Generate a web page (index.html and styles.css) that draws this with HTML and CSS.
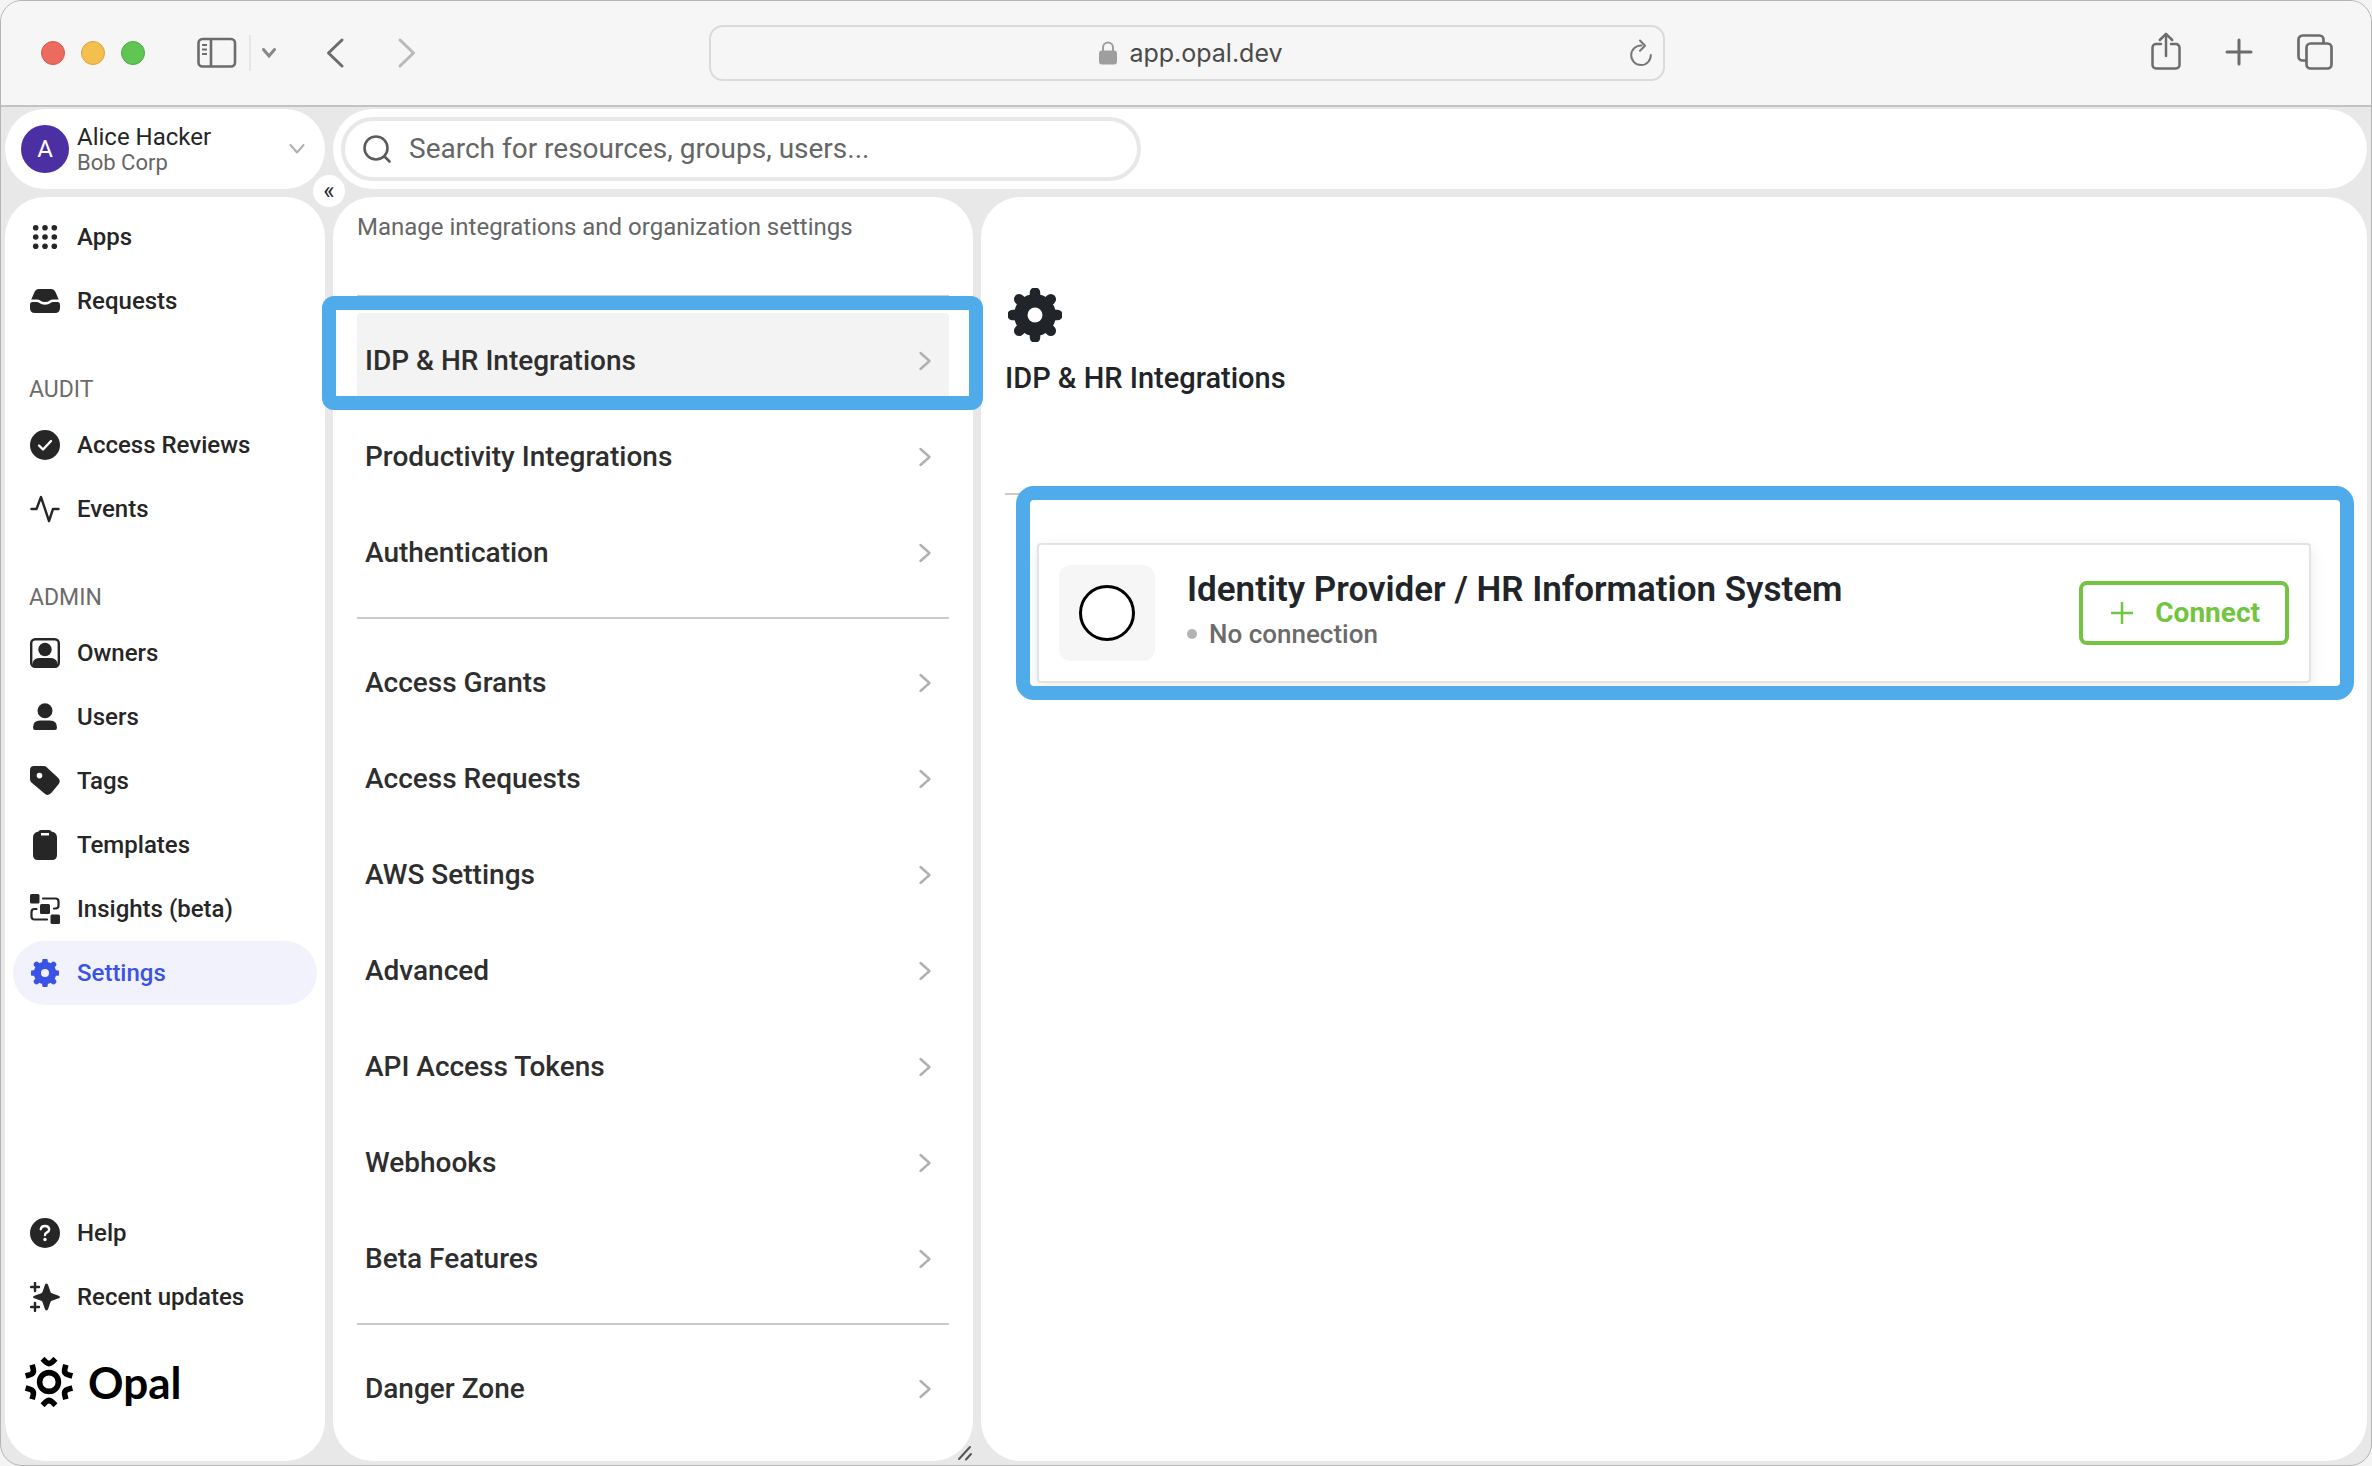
FILE: index.html
```html
<!DOCTYPE html>
<html lang="en">
<head>
<meta charset="utf-8">
<title>Opal – Settings</title>
<link rel="stylesheet" href="styles.css">
</head>
<body>
<svg class="sprite" aria-hidden="true">
  <defs>
    <mask id="gear-hole"><rect width="56" height="56" fill="#fff"/><circle cx="28" cy="28" r="7.5" fill="#000"/></mask>
    <symbol id="gear" viewBox="0 0 56 56">
      <g mask="url(#gear-hole)">
        <circle cx="28" cy="28" r="21" fill="currentColor"/>
        <path d="M28 5.500v45M5.500 28h45M12.200 12.200l31.600 31.600M43.800 12.200L12.200 43.800" stroke="currentColor" stroke-width="10.500" stroke-linecap="round"/>
      </g>
    </symbol>
    <symbol id="chevron" viewBox="0 0 14 20"><path d="M2.500 2l9 8-9 8" fill="none" stroke="currentColor" stroke-width="2.400" stroke-linecap="round" stroke-linejoin="round"/></symbol>
  </defs>
</svg>

<div class="window">
  <header class="titlebar">
    <div class="titlebar-left">
      <div class="lights"><i class="light red"></i><i class="light yellow"></i><i class="light green"></i></div>
      <button class="tool" aria-label="Toggle sidebar"><svg width="40" height="32" viewBox="0 0 40 32" fill="none" stroke="currentColor" stroke-width="2.6"><rect x="1.5" y="2" width="36.500" height="27.500" rx="4"/><path d="M14 2v27.500"/><path d="M5 8h5M5 12.500h5M5 17h5" stroke-width="2"/></svg></button>
      <span class="tool-rule"></span>
      <button class="tool tool-menu" aria-label="Sidebar menu"><svg width="16" height="12" viewBox="0 0 16 12" fill="none" stroke="currentColor" stroke-width="3" stroke-linecap="round"><path d="M2.500 2.500L8 9l5.500-6.500"/></svg></button>
      <button class="tool tool-back" aria-label="Back"><svg width="20" height="32" viewBox="0 0 20 32" fill="none" stroke="currentColor" stroke-width="3" stroke-linecap="round" stroke-linejoin="round"><path d="M17 3L3.500 16 17 29"/></svg></button>
      <button class="tool tool-forward" aria-label="Forward"><svg width="20" height="32" viewBox="0 0 20 32" fill="none" stroke="currentColor" stroke-width="3" stroke-linecap="round" stroke-linejoin="round"><path d="M3 3l13.500 13L3 29"/></svg></button>
    </div>
    <div class="address">
      <div class="address-text">
        <svg width="18" height="24" viewBox="0 0 18 24"><rect x="0" y="9.500" width="18" height="14" rx="3" fill="#9e9e9e"/><path d="M4 11V6.500a5 5 0 0 1 10 0V11" fill="none" stroke="#9e9e9e" stroke-width="2"/></svg>
        <span>app.opal.dev</span>
      </div>
      <button class="reload" aria-label="Reload"><svg width="24" height="28" viewBox="0 0 24 28" fill="none" stroke="currentColor" stroke-width="2" stroke-linecap="round" stroke-linejoin="round"><path d="M12.500 6.500A9.800 9.800 0 1 0 21.800 16M11 1.500l5 5.200-5 5"/></svg></button>
    </div>
    <div class="titlebar-right">
      <button class="tool" aria-label="Share"><svg width="30" height="42" viewBox="0 0 30 42" fill="none" stroke="currentColor" stroke-width="2.500" stroke-linecap="round" stroke-linejoin="round"><path d="M10 12H5a3.500 3.500 0 0 0-3.500 3.500V33A3.500 3.500 0 0 0 5 36.500h20a3.500 3.500 0 0 0 3.500-3.500V15.500A3.500 3.500 0 0 0 25 12h-5M15 24V2.500M8.800 8L15 1.800 21.200 8"/></svg></button>
      <button class="tool" aria-label="New tab"><svg width="28" height="30" viewBox="0 0 28 30" fill="none" stroke="currentColor" stroke-width="3" stroke-linecap="round"><path d="M14 2v24M2 14h24"/></svg></button>
      <button class="tool" aria-label="Tab overview"><svg width="36" height="38" viewBox="0 0 36 38" fill="none" stroke="currentColor" stroke-width="2.700"><rect x="9.500" y="9.500" width="25" height="25" rx="4"/><path d="M9.500 26.500H5.500a4 4 0 0 1-4-4v-17a4 4 0 0 1 4-4h17a4 4 0 0 1 4 4v4"/></svg></button>
    </div>
  </header>

  <div class="app">
    <button class="profile">
      <span class="avatar">A</span>
      <span class="profile-text"><span class="profile-name">Alice Hacker</span><span class="profile-org">Bob Corp</span></span>
      <svg width="16" height="12" viewBox="0 0 16 12" fill="none" stroke="#b0b0b0" stroke-width="2" stroke-linecap="round" stroke-linejoin="round"><path d="M1.500 2L8 9.500 14.500 2"/></svg>
    </button>
    <div class="topbar">
      <label class="search">
        <svg width="28" height="28" viewBox="0 0 28 28" fill="none" stroke="#5c5c5c" stroke-width="2.600" stroke-linecap="round"><circle cx="13" cy="13" r="11.500"/><path d="M21.500 21.500l5 5"/></svg>
        <input type="search" placeholder="Search for resources, groups, users..." aria-label="Search">
      </label>
    </div>

    <nav class="sidebar">
      <button class="collapse" aria-label="Collapse sidebar">«</button>
      <a class="nav-item" href="#"><svg viewBox="0 0 30 30" fill="currentColor"><circle cx="5.700" cy="5.700" r="2.800"/><circle cx="15" cy="5.700" r="2.800"/><circle cx="24.300" cy="5.700" r="2.800"/><circle cx="5.700" cy="15" r="2.800"/><circle cx="15" cy="15" r="2.800"/><circle cx="24.300" cy="15" r="2.800"/><circle cx="5.700" cy="24.300" r="2.800"/><circle cx="15" cy="24.300" r="2.800"/><circle cx="24.300" cy="24.300" r="2.800"/></svg>Apps</a>
      <a class="nav-item" href="#"><svg viewBox="0 0 30 30" fill="currentColor"><path d="M1.300 13.500L4.500 6Q6 3 9 3h12q3 0 4.500 3l3.200 7.500H23q-2 0-3.200 1Q18 16 15 16t-4.800-1.500q-1.200-1-3.200-1z"/><path d="M0 19q0-3 2.500-3H7q1.200 0 2.500 1 2 1.800 5.500 1.800t5.500-1.800q1.300-1 2.500-1h4.500Q30 16 30 19v3q0 5-5 5H5q-5 0-5-5z"/></svg>Requests</a>
      <h2 class="nav-label">AUDIT</h2>
      <a class="nav-item" href="#"><svg viewBox="0 0 30 30"><circle cx="15" cy="15" r="15" fill="currentColor"/><path d="M9 15.500l4 4 8-8.500" fill="none" stroke="#fff" stroke-width="2.400" stroke-linecap="round" stroke-linejoin="round"/></svg>Access Reviews</a>
      <a class="nav-item" href="#"><svg viewBox="0 0 30 30" fill="none" stroke="currentColor" stroke-width="2.400" stroke-linecap="round" stroke-linejoin="round"><path d="M1.500 15H6.500L11 3l8 24 4-12h5.500"/></svg>Events</a>
      <h2 class="nav-label">ADMIN</h2>
      <a class="nav-item" href="#"><svg viewBox="0 0 30 30" fill="currentColor"><rect x="1.200" y="1.200" width="27.600" height="27.600" rx="4" fill="none" stroke="currentColor" stroke-width="2.400"/><circle cx="15" cy="11.500" r="6.700"/><path d="M2.500 25q1.500-5 7-5h11q5.500 0 7 5v3H2.500z"/></svg>Owners</a>
      <a class="nav-item" href="#"><svg viewBox="0 0 30 30" fill="currentColor"><circle cx="15" cy="8.800" r="7.500"/><path d="M3 25.500Q3 18.500 10 18.500h10q7 0 7 7 0 2.500-2 2.500H5q-2 0-2-2.500z"/></svg>Users</a>
      <a class="nav-item" href="#"><svg viewBox="0 0 30 30" fill="currentColor" fill-rule="evenodd"><path d="M4 0H13.500q2 0 3.500 1.400L28 11.800q3.400 3.200 0.300 6.600L21.500 26.800q-3.600 4-7.300 0.500L1.400 16.500Q0 15.200 0 13V4q0-4 4-4zM9.500 6.800a2.800 2.800 0 1 0 0 5.600 2.800 2.800 0 0 0 0-5.600z"/></svg>Tags</a>
      <a class="nav-item" href="#"><svg viewBox="0 0 30 30" fill="currentColor" fill-rule="evenodd"><path d="M8.500 1.500Q9 0 11 0h8q2 0 2.500 1.500Q27 2.500 27 7.500V25q0 5-5 5H8q-5 0-5-5V7.500q0-5 5.500-6zM11 3v2.500h8V3z"/></svg>Templates</a>
      <a class="nav-item" href="#"><svg viewBox="0 0 30 30" fill="currentColor"><rect width="9.500" height="9.500" rx="1.500"/><rect x="10" y="10" width="10" height="10" rx="1.500"/><rect x="20.500" y="20.500" width="9.500" height="9.500" rx="1.500"/><path d="M13 4.500h12.500q3 0 3 3v4q0 3-3 3H24M6.500 15H4.500q-3 0-3 3v4.500q0 3 3 3H17" fill="none" stroke="currentColor" stroke-width="2.200" stroke-linecap="round"/></svg>Insights (beta)</a>
      <a class="nav-item active" href="#" aria-current="page"><svg><use href="#gear"/></svg>Settings</a>
      <div class="nav-bottom">
        <a class="nav-item" href="#"><svg viewBox="0 0 30 30"><circle cx="15" cy="15" r="15" fill="currentColor"/><path d="M10.800 11.200q.4-3.200 4.200-3.200t4.200 3.200q0 2-2.200 3.200t-2 2.600" fill="none" stroke="#fff" stroke-width="2.400" stroke-linecap="round"/><circle cx="15" cy="21.500" r="1.700" fill="#fff"/></svg>Help</a>
        <a class="nav-item" href="#"><svg viewBox="0 0 30 30" fill="currentColor"><path d="M16.500 1.500q1.300 0 1.800 2l2.200 6.500q.3 1 1.300 1.300L28 13.500q2 .5 2 1.500t-2 1.500l-6.200 2.200q-1 .3-1.300 1.300l-2.200 6.500q-.5 2-1.800 2t-1.800-2L12.500 20q-.3-1-1.300-1.300L5 16.500Q3 16 3 15t2-1.500l6.200-2.200q1-.3 1.300-1.300l2.200-6.500q.5-2 1.800-2z"/><path d="M5 1v8M1 5h8M5 21v8M1 25h8" stroke="currentColor" stroke-width="2.400" stroke-linecap="round"/></svg>Recent updates</a>
        <a class="logo" href="#">
          <svg width="50" height="50" viewBox="-25 -25 50 50" fill="none" stroke="#000" stroke-width="5.600">
            <defs><path id="claw" d="M-6.500-23.200L-3-19.800q3 2.600 6 0l3.500-3.400"/></defs>
            <circle r="9.400"/>
            <use href="#claw"/><use href="#claw" transform="rotate(60)"/><use href="#claw" transform="rotate(120)"/><use href="#claw" transform="rotate(180)"/><use href="#claw" transform="rotate(240)"/><use href="#claw" transform="rotate(300)"/>
          </svg>
          <span>Opal</span>
        </a>
      </div>
    </nav>

    <section class="list-panel">
      <p class="list-intro">Manage integrations and organization settings</p>
      <ul class="setting-group">
        <li class="setting-cell"><a class="setting selected" href="#">IDP &amp; HR Integrations<svg><use href="#chevron"/></svg></a><span class="callout callout-row"></span></li>
        <li><a class="setting" href="#">Productivity Integrations<svg><use href="#chevron"/></svg></a></li>
        <li><a class="setting" href="#">Authentication<svg><use href="#chevron"/></svg></a></li>
      </ul>
      <ul class="setting-group">
        <li><a class="setting" href="#">Access Grants<svg><use href="#chevron"/></svg></a></li>
        <li><a class="setting" href="#">Access Requests<svg><use href="#chevron"/></svg></a></li>
        <li><a class="setting" href="#">AWS Settings<svg><use href="#chevron"/></svg></a></li>
        <li><a class="setting" href="#">Advanced<svg><use href="#chevron"/></svg></a></li>
        <li><a class="setting" href="#">API Access Tokens<svg><use href="#chevron"/></svg></a></li>
        <li><a class="setting" href="#">Webhooks<svg><use href="#chevron"/></svg></a></li>
        <li><a class="setting" href="#">Beta Features<svg><use href="#chevron"/></svg></a></li>
      </ul>
      <ul class="setting-group">
        <li><a class="setting" href="#">Danger Zone<svg><use href="#chevron"/></svg></a></li>
      </ul>
      <svg class="resize" width="16" height="16" viewBox="0 0 16 16" stroke="#555" stroke-width="2" stroke-linecap="round"><path d="M2 14L13 2M9 14.500l5-5.500"/></svg>
    </section>

    <main class="detail">
      <svg class="detail-icon"><use href="#gear"/></svg>
      <h1 class="detail-title">IDP &amp; HR Integrations</h1>
      <div class="detail-body">
        <article class="card">
          <div class="card-tile"><span class="card-ring"></span></div>
          <div class="card-text">
            <h2 class="card-title">Identity Provider / HR Information System</h2>
            <p class="card-status">No connection</p>
          </div>
          <button class="connect"><svg width="22" height="22" viewBox="0 0 22 22" stroke="currentColor" stroke-width="2.500"><path d="M11 0v22M0 11h22"/></svg>Connect</button>
          <span class="callout callout-card"></span>
        </article>
      </div>
    </main>
  </div>
</div>
</body>
</html>
```
FILE: styles.css
```css
* { box-sizing: border-box; }

body {
  margin: 0;
  background: #f4f4f4;
  color: #262626;
  font-family: Roboto, "Liberation Sans", sans-serif;
  font-size: 24px;
  line-height: 32px;
}

button {
  border: 0;
  padding: 0;
  background: none;
  color: inherit;
  font: inherit;
}

a { color: inherit; text-decoration: none; }
h1, h2, p, ul { margin: 0; padding: 0; font-size: inherit; }
ul { list-style: none; }
svg { display: block; flex: none; }

.sprite { position: absolute; width: 0; height: 0; }

.window {
  display: flex;
  flex-direction: column;
  min-height: 100vh;
  border: 1px solid #b4b4b4;
  border-radius: 22px;
  background: #e8e8e8;
}

/* Browser toolbar */
.titlebar {
  display: grid;
  grid-template-columns: 1fr 956px 1fr;
  align-items: center;
  height: 106px;
  padding: 0 38px 0 40px;
  border-bottom: 2px solid #c3c3c3;
  border-radius: 21px 21px 0 0;
  background: #f6f6f6;
  color: #6c6c6c;
}
.titlebar-left, .titlebar-right { display: flex; align-items: center; }
.titlebar-right { justify-content: flex-end; gap: 44px; }
.lights { display: flex; gap: 16px; margin-right: 52px; }
.light { width: 24px; height: 24px; border-radius: 50%; border: 1px solid; }
.red { background: #ec6a5e; border-color: #d3584d; }
.yellow { background: #f5bf4f; border-color: #d9a33c; }
.green { background: #61c554; border-color: #4fab42; }
.tool-rule { width: 2px; height: 36px; margin: 0 10px 0 12px; background: #e6e6e6; }
.tool-menu { color: #86868b; }
.tool-back { margin-left: 48px; }
.tool-forward { margin-left: 52px; color: #b9b9b9; }
.address {
  display: flex;
  align-items: center;
  height: 56px;
  padding-right: 10px;
  border: 2px solid #dadada;
  border-radius: 14px;
}
.address-text {
  display: flex;
  flex: 1;
  align-items: center;
  justify-content: center;
  gap: 12px;
  padding-left: 42px;
  color: #4a4a4a;
  font-family: Inter, sans-serif;
  font-size: 25px;
}
.reload { color: #777; }

/* Application grid */
.app {
  display: grid;
  flex: 1;
  grid-template-columns: 320px 640px 1fr;
  grid-template-rows: 80px 1fr;
  gap: 8px;
  padding: 2px 4px 4px;
}
.profile {
  display: flex;
  align-items: center;
  padding: 0 20px 0 16px;
  border-radius: 40px;
  background: #fff;
  text-align: left;
}
.avatar {
  width: 48px;
  height: 48px;
  margin-right: 8px;
  border-radius: 50%;
  background: #4b2fa3;
  color: #fff;
  line-height: 48px;
  text-align: center;
}
.profile-text { display: flex; flex: 1; flex-direction: column; padding-top: 2px; line-height: 26px; }
.profile-org { color: #666; font-size: 22px; }
.topbar {
  grid-column: 2 / 4;
  padding: 8px;
  border-radius: 40px;
  background: #fff;
}
.search {
  display: flex;
  align-items: center;
  gap: 18px;
  width: 800px;
  height: 64px;
  padding: 0 18px;
  border: 4px solid #e8e8e8;
  border-radius: 32px;
}
.search input {
  flex: 1;
  border: 0;
  padding: 0;
  outline: 0;
  background: none;
  color: #262626;
  font: inherit;
  font-size: 28px;
}
.search input::placeholder { color: #666; opacity: 1; }

/* Sidebar */
.sidebar {
  position: relative;
  display: flex;
  flex-direction: column;
  padding: 8px;
  border-radius: 40px;
  background: #fff;
}
.collapse {
  position: absolute;
  top: -22px;
  right: -20px;
  width: 32px;
  height: 32px;
  border-radius: 50%;
  background: #fff;
  line-height: 28px;
}
.nav-item {
  display: flex;
  align-items: center;
  gap: 17px;
  height: 64px;
  padding: 0 17px;
  border-radius: 32px;
  font-weight: 500;
}
.nav-item svg { width: 30px; height: 30px; }
.nav-item.active { background: #f2f2fd; color: #3a53e4; }
.nav-label {
  margin-top: 32px;
  padding: 1px 16px 0;
  color: #6b6b6b;
  font-size: 23px;
  font-weight: 400;
  line-height: 47px;
}
.nav-bottom { margin-top: auto; }
.logo {
  display: flex;
  align-items: center;
  gap: 14px;
  height: 106px;
  margin-bottom: 18px;
  padding-left: 11px;
  color: #000;
  font-family: Lato, sans-serif;
  font-size: 44px;
  font-weight: 700;
}

/* Settings list */
.list-panel {
  position: relative;
  padding: 14px 24px 8px;
  border-radius: 40px;
  background: #fff;
}
.list-intro { margin-bottom: 52px; color: #666; }
.setting-group { padding: 16px 0; border-top: 2px solid #cbcbcb; }
.setting-group:last-of-type { padding-bottom: 16px; }
.setting-cell { position: relative; }
.setting {
  display: flex;
  align-items: center;
  justify-content: space-between;
  height: 96px;
  padding: 0 17px 0 8px;
  border-radius: 4px;
  color: #2e2e2e;
  font-size: 28px;
  font-weight: 500;
}
.setting.selected { background: #f3f3f3; }
.setting svg { width: 14px; height: 20px; color: #b0b0b0; }
.resize { position: absolute; right: 0; bottom: 0; }

/* Blue outlines that draw attention to a step */
.callout {
  position: absolute;
  z-index: 1;
  border: 14px solid #4fabe9;
  pointer-events: none;
}
.callout-row { inset: -17px -34px -1px -35px; border-radius: 12px; }
.callout-card { inset: -59px -45px -19px -23px; border-radius: 18px; }

/* Detail panel */
.detail {
  padding: 90px 24px 24px;
  border-radius: 40px;
  background: #fff;
  color: #212529;
}
.detail-icon { width: 56px; height: 56px; margin-left: 2px; }
.detail-title {
  margin: 19px 0 99px;
  font-size: 29px;
  font-weight: 500;
}
.detail-body { padding: 48px 32px; border-top: 2px solid #cbcbcb; }
.card {
  position: relative;
  display: flex;
  align-items: center;
  height: 140px;
  padding: 0 20px;
  border: 2px solid #e3e3e3;
  border-radius: 4px;
  box-shadow: 0 4px 16px rgba(0, 0, 0, 0.08);
}
.card-tile {
  display: grid;
  place-items: center;
  width: 96px;
  height: 96px;
  margin-right: 32px;
  border-radius: 12px;
  background: #f6f6f6;
}
.card-ring {
  width: 56px;
  height: 56px;
  border: 3px solid #000;
  border-radius: 50%;
  background: #fff;
}
.card-text { flex: 1; padding-bottom: 6px; }
.card-title { font-size: 35px; font-weight: 600; line-height: 48px; }
.card-status {
  display: flex;
  align-items: center;
  gap: 12px;
  color: #6b6b6b;
  font-size: 26px;
  font-weight: 500;
  line-height: 40px;
}
.card-status::before {
  content: "";
  width: 10px;
  height: 10px;
  border-radius: 50%;
  background: #b3b3b3;
}
.connect {
  display: flex;
  align-items: center;
  gap: 22px;
  height: 64px;
  padding: 0 25px 0 28px;
  border: 4px solid #73c441;
  border-radius: 8px;
  color: #73c441;
  font-size: 28px;
  font-weight: 700;
}
```
